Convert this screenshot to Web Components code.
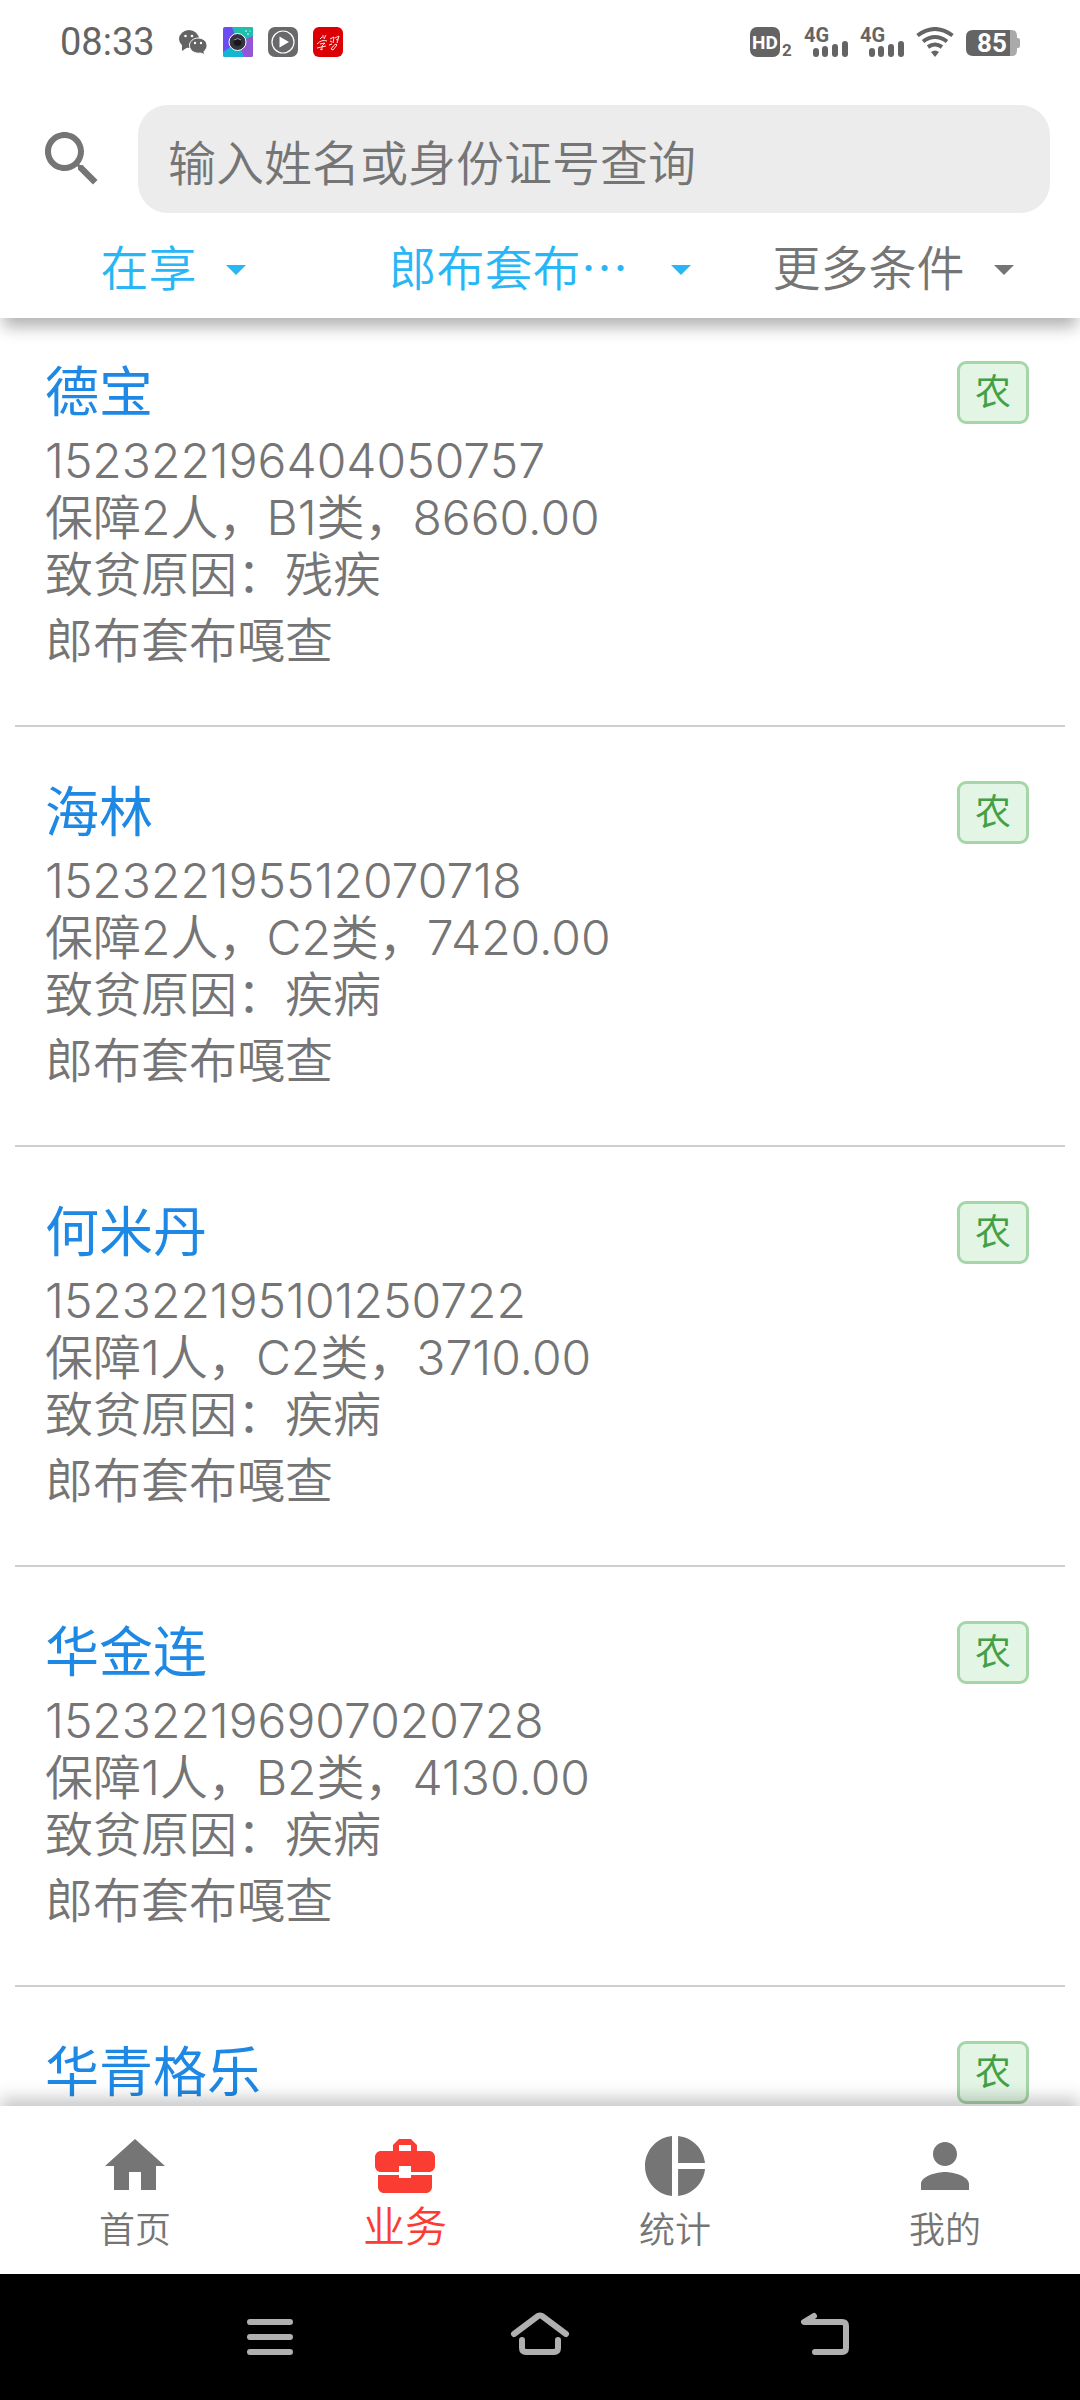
<!DOCTYPE html>
<html lang="zh-CN">
<head>
<meta charset="utf-8">
<meta name="viewport" content="width=device-width, initial-scale=1">
<title>业务</title>
<style>
html, body { margin: 0; height: 100%; }
body { font-family: Inter, "Noto Sans CJK SC", sans-serif; color: #757575; background: #fff; }
</style>
</head>
<body>
<app-shell>
  <status-bar slot="top"></status-bar>
  <search-header slot="top"></search-header>
  <person-card name="德宝" code="152322196404050757" summary="保障2人，B1类，8660.00" reason="残疾" village="郎布套布嘎查" tag="农"></person-card>
  <person-card name="海林" code="152322195512070718" summary="保障2人，C2类，7420.00" reason="疾病" village="郎布套布嘎查" tag="农"></person-card>
  <person-card name="何米丹" code="152322195101250722" summary="保障1人，C2类，3710.00" reason="疾病" village="郎布套布嘎查" tag="农"></person-card>
  <person-card name="华金连" code="152322196907020728" summary="保障1人，B2类，4130.00" reason="疾病" village="郎布套布嘎查" tag="农"></person-card>
  <person-card name="华青格乐" tag="农"></person-card>
  <tab-bar slot="bottom">
    <tab-item icon="home">首页</tab-item>
    <tab-item icon="work" active>业务</tab-item>
    <tab-item icon="chart">统计</tab-item>
    <tab-item icon="me">我的</tab-item>
  </tab-bar>
  <system-bar slot="bottom"></system-bar>
</app-shell>
<script>
const define = (name, render) => customElements.define(name, class extends HTMLElement {
  constructor() {
    super();
    this.attachShadow({ mode: "open" });
  }
  connectedCallback() {
    this.shadowRoot.innerHTML = "<style>:host,*{box-sizing:border-box}</style>" + render(this);
  }
});

define("app-shell", () => `
<style>
:host { display: flex; flex-direction: column; height: 100vh; overflow: hidden; }
header, footer { position: relative; z-index: 1; flex: none; }
main { flex: 1; min-height: 0; overflow: hidden; padding: 0 15px; }
</style>
<header><slot name="top"></slot></header>
<main><slot></slot></main>
<footer><slot name="bottom"></slot></footer>`);

define("status-bar", () => `
<style>
:host { display: flex; justify-content: space-between; align-items: center; height: 84px; padding: 0 60px; background: #fff; color: #646464; }
div { display: flex; align-items: center; }
.left { gap: 15px; }
.right { gap: 12px; }
time { font: 38px/44px Roboto, sans-serif; margin-right: 8px; }
svg { display: block; }
text { font-family: Roboto, sans-serif; font-weight: 700; }
</style>
<div class="left">
  <time>08:33</time>
  <svg width="30" height="30" viewBox="0 0 30 30"><g fill="#646464"><ellipse cx="11" cy="12" rx="10" ry="9"/><path d="M4 18l0 6 6-4z"/><g stroke="#fff" stroke-width="1"><path d="M20 11c5 0 9 3.300 9 7.500 0 2.500-1.300 4.500-3 6l.5 3-4-1.500c-6 1-11-2.500-11-7.500 0-4.200 4-7.500 8.500-7.500z"/></g></g><g fill="#fff"><circle cx="7.500" cy="9" r="1.300"/><circle cx="14" cy="9" r="1.300"/><circle cx="17" cy="16" r="1.200"/><circle cx="23" cy="16" r="1.200"/></g></svg>
  <svg width="30" height="30" viewBox="0 0 30 30"><rect width="30" height="30" rx="2" fill="#6a4df0"/><path d="M9 0h19q2 0 2 2v9L15 15z" fill="#1fbfae"/><path d="M30 9v19q0 2-2 2h-8l-5-15z" fill="#9357d6"/><path d="M0 25l15-10 6 15H2q-2 0-2-2z" fill="#16b4d3"/><circle cx="14.500" cy="15" r="8.500" fill="#35353f" stroke="#fff"/><circle cx="14.500" cy="15" r="4" fill="#17171c"/><path d="M11 13q4-3 7 0" stroke="#b58fc0" stroke-width="1" fill="none"/><circle cx="23" cy="4" r=".8" fill="#fff"/><circle cx="25" cy="7" r=".8" fill="#fff"/><circle cx="27" cy="4" r=".6" fill="#fff"/></svg>
  <svg width="30" height="30" viewBox="0 0 30 30"><rect width="30" height="30" rx="7" fill="#69696b"/><circle cx="15" cy="15" r="11" fill="none" stroke="#fff" stroke-width="1.200"/><path d="M11.500 9.500v11L21 15z" fill="#fff"/></svg>
  <svg width="30" height="30" viewBox="0 0 30 30"><rect width="30" height="30" rx="6" fill="#dc0005"/><path d="M7 12l2-2M10 8l0 3M13 8l-2 4M4 17q5-5 10-3M7 17l5-1-3 3v4l-2-1M4 21l9-2M17 12l4-2-1 6M17 14l2 1M16 18l3-1M22 11l4-2-2 7M23 13l2-1M18 22q5-7 6-4l-4 5-2-1" stroke="#fff" stroke-width=".9" fill="none"/></svg>
</div>
<div class="right">
  <svg width="42" height="42" viewBox="0 -6 42 42" fill="#646464"><rect width="30" height="30" rx="7"/><text x="2" y="22" font-size="19" fill="#fff">HD</text><text x="32" y="29" font-size="17">2</text></svg>
  <svg width="44" height="42" viewBox="0 -6 44 42" fill="#646464"><text x="0" y="15" font-size="20">4G</text><rect x="9" y="21" width="6" height="9" rx="3"/><rect x="18" y="19" width="6" height="11" rx="3"/><rect x="28" y="17" width="6" height="13" rx="3"/><rect x="38" y="14" width="6" height="16" rx="3"/></svg>
  <svg width="44" height="42" viewBox="0 -6 44 42" fill="#646464"><text x="0" y="15" font-size="20">4G</text><rect x="9" y="21" width="6" height="9" rx="3"/><rect x="18" y="19" width="6" height="11" rx="3"/><rect x="28" y="17" width="6" height="13" rx="3"/><rect x="38" y="14" width="6" height="16" rx="3"/></svg>
  <svg width="38" height="30" viewBox="0 0 38 30"><g fill="none" stroke="#646464" stroke-width="4"><path d="M1.500 8.500q17.500-13 35 0"/><path d="M7 14.500q12-9 24 0"/><path d="M12 20q7-5 14 0"/></g><path d="M15 25q4-3 8 0l-4 5z" fill="#646464"/></svg>
  <svg width="54" height="30" viewBox="0 -2 54 30"><path d="M43 1h3q5 0 5 6v2h1q2 0 2 2v6q0 2-2 2h-1v2q0 6-5 6h-3z" fill="#aaa"/><path d="M7 1h37v26H7q-7 0-7-7V8q0-7 7-7z" fill="#646464"/><text x="11" y="23" font-size="26" fill="#fff">85</text></svg>
</div>`);

define("search-header", () => `
<style>
:host { display: block; }
.panel { background: #fff; box-shadow: 0 12px 15px -3px rgba(0,0,0,.3); clip-path: inset(0 0 -60px 0); padding-top: 21px; }
.search { display: flex; align-items: center; gap: 30px; padding: 0 30px 0 36px; }
svg { display: block; flex: none; fill: currentColor; }
input { flex: 1; min-width: 0; height: 108px; border: 0; border-radius: 30px; background: #ececec; padding: 9px 30px 0; font: 350 48px/72px Inter, "Noto Sans CJK SC", sans-serif; color: inherit; outline: 0; }
input::placeholder { color: #757575; opacity: 1; }
.filters { display: grid; grid-template-columns: repeat(3, 1fr); height: 105px; }
.filters > * { display: flex; align-items: center; justify-content: center; gap: 15px; padding: 6px 15px 0; min-width: 0; }
.on { color: #29b6f6; }
select, button { appearance: none; border: 0; background: none; color: inherit; margin: 0; padding: 0; font: 350 48px/72px "Noto Sans CJK SC", sans-serif; }
select { text-align: center; text-align-last: center; }
select, span { padding-bottom: 8px; }
.wide select { flex: 1; min-width: 0; }
</style>
<div class="panel">
<div class="search">
  <svg width="72" height="72" viewBox="0 0 24 24"><path d="M15.500 14h-.79l-.28-.27C15.410 12.590 16 11.110 16 9.500 16 5.910 13.090 3 9.500 3S3 5.910 3 9.500 5.910 16 9.500 16c1.610 0 3.090-.59 4.230-1.570l.27.28v.79l5 4.990L20.490 19l-4.990-5zm-6 0C7.010 14 5 11.990 5 9.500S7.010 5 9.500 5 14 7.010 14 9.500 11.990 14 9.500 14z"/></svg>
  <input type="search" placeholder="输入姓名或身份证号查询" aria-label="输入姓名或身份证号查询">
</div>
<div class="filters">
  <label class="on"><select><option>在享</option></select><svg width="48" height="48" viewBox="0 0 24 24"><path d="M7 10l5 5 5-5z"/></svg></label>
  <label class="on wide"><select><option>郎布套布…</option></select><svg width="48" height="48" viewBox="0 0 24 24"><path d="M7 10l5 5 5-5z"/></svg></label>
  <button type="button"><span>更多条件</span><svg width="48" height="48" viewBox="0 0 24 24"><path d="M7 10l5 5 5-5z"/></svg></button>
</div>
</div>`);

define("person-card", el => {
  const a = n => el.getAttribute(n) || "";
  return `
<style>
:host { display: block; height: 420px; padding: 43px 36px 0 30px; border-bottom: 2px solid #cfcfcf; }
:host(:first-of-type) { height: 409px; padding-top: 32px; }
.head { display: flex; justify-content: space-between; align-items: flex-start; height: 82px; }
h2 { margin: 0; font-size: 54px; line-height: 86px; font-weight: 400; color: #1e88e5; }
.tag { width: 72px; height: 63px; margin-top: 11px; border: 3px solid #a5d6a7; border-radius: 9px; background: #e3f5e5; color: #43a047; font-size: 36px; line-height: 56px; text-align: center; }
p { margin: 0; font-size: 48px; line-height: 57px; font-weight: 350; }
.village { margin-top: 9px; }
</style>
<div class="head"><h2>${a("name")}</h2><span class="tag">${a("tag")}</span></div>
${a("code") ? `<p>${a("code")}</p><p>${a("summary")}</p><p>致贫原因：${a("reason")}</p><p class="village">${a("village")}</p>` : ""}`;
});

define("tab-bar", () => `
<style>
:host { display: block; background: #fff; box-shadow: 0 -8px 16px rgba(0,0,0,.22); }
nav { display: grid; grid-template-columns: repeat(4, 1fr); height: 168px; }
</style>
<nav><slot></slot></nav>`);

const glyphs = {
  home: "M10 20v-6h4v6h5v-8h3L12 3 2 12h3v8z",
  work: "M10 16v-1H3.010L3 19c0 1.110.89 2 2 2h14c1.110 0 2-.89 2-2v-4h-7v1h-4zm10-9h-4.010V5l-2-2h-4l-2 2v2H4c-1.100 0-2 .9-2 2v3c0 1.110.89 2 2 2h6v-2h4v2h6c1.100 0 2-.9 2-2V9c0-1.100-.9-2-2-2zm-6 0h-4V5h4v2z",
  chart: "M11 2v20c-5.070-.5-9-4.790-9-10s3.930-9.500 9-10zm2.030 0v8.990H22c-.47-4.740-4.240-8.520-8.970-8.990zm0 11.010V22c4.740-.47 8.500-4.250 8.970-8.990h-8.970z",
  me: "M12 12c2.210 0 4-1.790 4-4s-1.790-4-4-4-4 1.790-4 4 1.790 4 4 4zm0 2c-2.670 0-8 1.340-8 4v2h16v-2c0-2.660-5.330-4-8-4z"
};
define("tab-item", el => `
<style>
:host { display: block; color: #757575; font-size: 36px; font-weight: 350; }
:host([active]) { color: #fa3c33; font-size: 42px; }
a { display: flex; flex-direction: column; align-items: center; padding-top: 24px; color: inherit; text-decoration: none; }
svg { display: block; fill: currentColor; }
span { line-height: 56px; }
:host([active]) span { line-height: 50px; }
</style>
<a href="#"><svg width="72" height="72" viewBox="0 0 24 24"><path d="${glyphs[el.getAttribute("icon")]}"/></svg><span><slot></slot></span></a>`);

define("system-bar", () => `
<style>
:host { display: flex; position: relative; justify-content: center; align-items: center; gap: 180px; height: 126px; background: #000; }
button { appearance: none; border: 0; padding: 0; background: none; }
svg { display: block; fill: none; stroke: #b0b0b0; stroke-width: 6; stroke-linecap: round; stroke-linejoin: round; }
</style>
<button type="button" aria-label="菜单"><svg width="90" height="60" viewBox="0 0 90 60"><path d="M25 15h40M25 30h40M25 45h40"/></svg></button>
<button type="button" aria-label="主页"><svg width="90" height="60" viewBox="0 0 90 60"><path d="M19 27L43 9q2-1 4 0l24 18M27 33v8q0 4 4 4h28q4 0 4-4v-8"/></svg></button>
<button type="button" aria-label="返回"><svg width="90" height="60" viewBox="0 0 90 60"><path d="M49 9l-10 6h38q4 0 4 4v22q0 4-4 4H50"/></svg></button>`);
</script>
</body>
</html>
